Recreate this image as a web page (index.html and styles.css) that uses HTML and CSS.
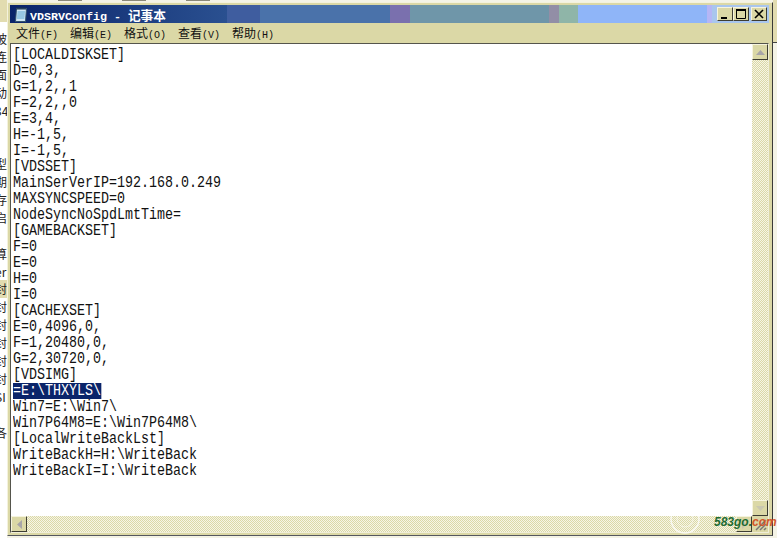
FILE: index.html
```html
<!DOCTYPE html>
<html lang="zh">
<head>
<meta charset="utf-8">
<title>VDSRVConfig - 记事本</title>
<link rel="stylesheet" href="styles.css">
</head>
<body>
<div class="screen">
  <div class="behind">
    <div class="behind-top"></div>
    <div class="behind-text">
      <span>被</span><span>连</span><span>面</span><span>动</span><span>34</span><span></span><span></span><span>型</span><span>期</span><span>存</span><span>启</span><span></span><span>算</span><span>er</span><span class="hl">封</span><span>封</span><span>封</span><span>封</span><span>封</span><span>封</span><span>SI</span><span></span><span>各</span>
    </div>
  </div>
  <div class="window">
    <div class="titlebar">
      <div class="bands">
        <i class="b1"></i><i class="b2"></i><i class="b3"></i><i class="b4"></i><i class="b5"></i><i class="b6"></i><i class="b7"></i><i class="b8"></i><i class="b9"></i>
      </div>
      <svg class="app-icon" width="16" height="16" viewBox="0 0 16 16"><path d="M3.5 2.5h10l-1 13h-10z" fill="#cfe6f5" stroke="#33536e"/><path d="M4 1v3M6 1v3M8 1v3M10 1v3M12 1v3" stroke="#1d3550"/><path d="M4.5 6h7.500M4.300 8h7.500M4.100 10h7.500M3.900 12h7.500" stroke="#5fa6d2"/></svg>
      <span class="title-text">VDSRVConfig - <b>记事本</b></span>
      <div class="win-btns">
        <div class="wb"><svg width="12" height="12" viewBox="0 0 12 12"><rect x="2" y="9" width="6" height="2" fill="#000"/></svg></div>
        <div class="wb"><svg width="12" height="12" viewBox="0 0 12 12"><path d="M1.500 1.500h9v9h-9z" fill="none" stroke="#000"/><rect x="1" y="1" width="10" height="2" fill="#000"/></svg></div>
        <div class="wb close"><svg width="12" height="12" viewBox="0 0 12 12"><path d="M2 2l8 8M10 2l-8 8" stroke="#000" stroke-width="1.600"/></svg></div>
      </div>
    </div>
    <div class="menubar">
      <span>文件<small>(F)</small></span><span>编辑<small>(E)</small></span><span>格式<small>(O)</small></span><span>查看<small>(V)</small></span><span>帮助<small>(H)</small></span>
    </div>
    <div class="client">
      <div class="hrow">
        <div class="edit">
          <div class="lines">
            <div>[LOCALDISKSET]</div>
            <div>D=0,3,</div>
            <div>G=1,2,,1</div>
            <div>F=2,2,,0</div>
            <div>E=3,4,</div>
            <div>H=-1,5,</div>
            <div>I=-1,5,</div>
            <div>[VDSSET]</div>
            <div>MainSerVerIP=192.168.0.249</div>
            <div>MAXSYNCSPEED=0</div>
            <div>NodeSyncNoSpdLmtTime=</div>
            <div>[GAMEBACKSET]</div>
            <div>F=0</div>
            <div>E=0</div>
            <div>H=0</div>
            <div>I=0</div>
            <div>[CACHEXSET]</div>
            <div>E=0,4096,0,</div>
            <div>F=1,20480,0,</div>
            <div>G=2,30720,0,</div>
            <div>[VDSIMG]</div>
            <div><span class="sel">=E:\THXYLS\</span></div>
            <div>Win7=E:\Win7\</div>
            <div>Win7P64M8=E:\Win7P64M8\</div>
            <div>[LocalWriteBackLst]</div>
            <div>WriteBackH=H:\WriteBack</div>
            <div>WriteBackI=I:\WriteBack</div>
          </div>
        </div>
        <div class="vscroll">
          <div class="sb-btn"><svg width="9" height="5" viewBox="0 0 9 5"><path d="M4.500 0L9 5H0z" fill="#a8a5a8"/></svg></div>
          <div class="track"></div>
          <div class="sb-btn"><svg width="9" height="5" viewBox="0 0 9 5"><path d="M4.500 5L9 0H0z" fill="#c9c7b0"/></svg></div>
        </div>
      </div>
      <div class="hscroll">
        <div class="sb-btn"><svg width="5" height="9" viewBox="0 0 5 9"><path d="M0 4.500L5 0v9z" fill="#a8a5a8"/></svg></div>
        <div class="track"></div>
        <div class="sb-btn"><svg width="5" height="9" viewBox="0 0 5 9"><path d="M5 4.500L0 0v9z" fill="#c9c7b0"/></svg></div>
        <div class="corner"><svg width="16" height="16" viewBox="0 0 16 16"><path d="M14 4L4 14M14 8L8 14M14 12l-2 2" stroke="#777" stroke-width="1.500"/></svg></div>
      </div>
    </div>
  </div>
  <div class="right-strip"></div>
  <div class="top-marks"><i></i><i></i><i></i></div>
  <svg class="wm-ring" width="40" height="24" viewBox="0 0 40 24"><circle cx="20" cy="8" r="14" fill="none" stroke="#fff" stroke-width="1.500" opacity=".75"/><circle cx="20" cy="8" r="8" fill="none" stroke="#fff" opacity=".5"/></svg>
  <div class="stamp">583go.<em>com</em></div>
</div>
</body>
</html>
```
FILE: styles.css
```css
* { box-sizing: border-box; }
html, body { margin: 0; padding: 0; }
body { width: 777px; height: 538px; overflow: hidden; background: #fff; }
.screen { position: relative; width: 777px; height: 538px; display: flex; overflow: hidden; background: #f4f3e6; }
.behind { width: 7px; flex: none; background: #fff; overflow: hidden; }
.behind-top { height: 22px; background: #e2dcb0; }
.behind-text { padding-top: 8px; font: 12px "Noto Sans CJK SC", sans-serif; color: #222; width: 7px; }
.behind-text span { display: block; height: 17.9px; line-height: 18px; width: 12px; margin-left: -5px; white-space: nowrap; }
.behind-text .hl { background: #e2dcb0; width: 13px; }
.window { width: 766px; height: 534px; margin-top: 2px; flex: none; background: #dbd8a6; border: 1px solid; border-color: #f4f2dc #3a3a38 #55585f #f4f2dc; padding: 2px 3px 2px 2px; display: flex; flex-direction: column; }
.titlebar { height: 18px; display: flex; align-items: center; position: relative; background: #a9c6ee; overflow: hidden; flex: none; }
.app-icon { margin-left: 3px; flex: none; position: relative; }
.title-text { position: relative; color: #fff; font: bold 11.67px "Liberation Mono", monospace; margin-left: 1px; white-space: nowrap; }
.title-text b { font: bold 12.67px "Noto Sans CJK SC", sans-serif; }
.bands { position: absolute; top: 0; bottom: 0; left: 0; display: flex; }
.bands i { display: block; height: 100%; }
.b1 { width: 217px; background: linear-gradient(90deg, #0a246a, #2a5090); }
.b2 { width: 33px; background: #3f5d9f; }
.b3 { width: 130px; background: #4a72aa; }
.b4 { width: 20px; background: #7a70ae; }
.b5 { width: 139px; background: #6f96a9; }
.b6 { width: 10px; background: #928ea6; }
.b7 { width: 19px; background: #8fb5a8; }
.b8 { width: 129px; background: #8fb5f8; }
.b9 { width: 5px; background: #b5b6f5; }
.win-btns { position: absolute; right: 2px; top: 2px; display: flex; }
.wb { width: 16px; height: 14px; background: #dbd8a6; border: 1px solid; border-color: #f6f4de #3d3d33 #3d3d33 #f6f4de; display: flex; align-items: center; justify-content: center; }
.wb.close { margin-left: 2px; }
.menubar { height: 20px; display: flex; align-items: center; flex: none; padding: 0 0 2px 6px; gap: 12px; font: 12px "Noto Sans CJK SC", sans-serif; color: #111; background: #dbd8a6; }
.menubar span { white-space: nowrap; width: 42px; flex: none; }
.menubar small { font: 10px "Liberation Mono", monospace; }
.client { flex: 1; min-height: 0; display: flex; flex-direction: column; border: 1px solid; border-color: #55554c #f0eed8 #f0eed8 #55554c; background: #fff; }
.hrow { flex: 1; min-height: 0; display: flex; }
.edit { flex: 1; min-width: 0; padding: 3px 0 0 2px; background: #fff; overflow: hidden; }
.lines { width: 880px; font: 16px/16px "Liberation Mono", monospace; color: #111; transform: scaleX(.8333); transform-origin: 0 0; }
.lines > div { height: 16px; white-space: pre; }
.sel { background: #0a246a; color: #fff; display: inline-block; height: 16px; }
.vscroll { width: 16px; flex: none; display: flex; flex-direction: column; background-image: repeating-conic-gradient(#dbd8a6 0 25%, #f6f5e6 0 50%); background-size: 2px 2px; }
.sb-btn { width: 16px; height: 16px; background: #dbd8a6; border: 1px solid; border-color: #f6f4de #3d3d33 #3d3d33 #f6f4de; display: flex; align-items: center; justify-content: center; flex: none; }
.hscroll { height: 16px; flex: none; display: flex; background-image: repeating-conic-gradient(#dbd8a6 0 25%, #f6f5e6 0 50%); background-size: 2px 2px; }
.track { flex: 1; }
.corner { width: 16px; height: 16px; background: #dbd8a6; }
.right-strip { flex: 1; height: 43px; background: #e2dcb0; border-bottom: 1px solid #444; }
.top-marks { position: absolute; left: 0; top: 0; width: 777px; height: 1px; display: flex; padding-left: 58px; gap: 40px; }
.top-marks i { display: block; width: 24px; height: 1px; background: #8a8878; }
.wm-ring { position: absolute; left: 665px; top: 511px; }
.stamp { position: absolute; left: 714px; top: 515px; font: italic bold 12px "Liberation Sans", sans-serif; color: #1e6b32; white-space: nowrap; }
.stamp em { color: #d2562a; }
```
